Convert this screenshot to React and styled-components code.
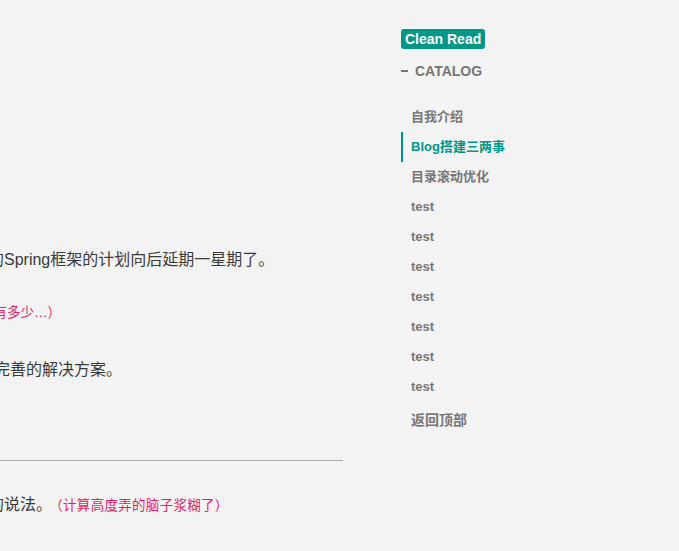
import React from 'react';
import styled, { createGlobalStyle } from 'styled-components';

const TEAL = '#009688';
const GRAY = '#777777';
const TEXT = '#3a3a3a';
const PINK = '#e91e63';

const GlobalStyle = createGlobalStyle`
  html, body {
    margin: 0;
    padding: 0;
    background: #f3f3f3;
  }
  body {
    font-family: "Liberation Sans", "Noto Sans CJK SC", sans-serif;
  }
`;

const Page = styled.div`
  display: flex;
  width: 679px;
  height: 551px;
  overflow: hidden;
  background: #f3f3f3;
`;

const Article = styled.article`
  flex: none;
  width: 343px;
  padding-top: 247px;
  overflow: hidden;
  color: ${TEXT};
`;

const Line = styled.p`
  margin: ${p => p.$gap || 0}px 0 0 ${p => p.$shift}px;
  white-space: nowrap;
  font-size: 16px;
  line-height: 26px;
`;

const Note = styled.span`
  margin-left: 4px;
  color: ${PINK};
  font-size: 13.5px;
  letter-spacing: 0.3px;
  line-height: 20px;
`;

const NoteLine = styled.p`
  margin: ${p => p.$gap}px 0 0 ${p => p.$shift}px;
  white-space: nowrap;
  font-size: 13.5px;
  line-height: 20px;
  color: ${PINK};
`;

const Rule = styled.hr`
  margin: 77px 0 0;
  border: none;
  height: 1px;
  background: #a8a8a8;
`;

const Sidebar = styled.aside`
  margin-left: 58px;
  padding-top: 29px;
  display: flex;
  flex-direction: column;
  align-items: flex-start;
`;

const Badge = styled.div`
  background: ${TEAL};
  color: #fff;
  font-weight: bold;
  font-size: 14px;
  line-height: 20px;
  padding: 0 4px;
  border-radius: 3px;
`;

const Heading = styled.div`
  margin-top: 12px;
  display: flex;
  align-items: center;
  gap: 7px;
  font-size: 14px;
  font-weight: bold;
  line-height: 20px;
  color: ${GRAY};

  &::before {
    content: '';
    width: 7px;
    height: 2px;
    background: ${GRAY};
  }
`;

const Catalog = styled.ul`
  list-style: none;
  margin: 21px 0 0;
  padding: 0;
`;

const Item = styled.li`
  height: 30px;
  line-height: 30px;
  padding-left: 8px;
  border-left: 2px solid ${p => (p.$active ? TEAL : 'transparent')};
  font-size: ${p => (p.$big ? 14 : 13)}px;
  font-weight: bold;
  color: ${p => (p.$active ? TEAL : GRAY)};
  margin-top: ${p => (p.$big ? 3 : 0)}px;
  white-space: nowrap;
`;

const items = ['自我介绍', 'Blog搭建三两事', '目录滚动优化', 'test', 'test', 'test', 'test', 'test', 'test', 'test'];

function App() {
  return (
    <>
      <GlobalStyle />
      <Page>
        <Article>
          <Line $shift={-12}>的Spring框架的计划向后延期一星期了。</Line>
          <NoteLine $gap={30} $shift={-20}>不有多少…）</NoteLine>
          <Line $gap={34} $shift={-6}>完善的解决方案。</Line>
          <Rule />
          <Line $gap={31} $shift={-12}>
            的说法。<Note>（计算高度弄的脑子浆糊了）</Note>
          </Line>
        </Article>
        <Sidebar>
          <Badge>Clean Read</Badge>
          <Heading>CATALOG</Heading>
          <Catalog>
            {items.map((name, i) => (
              <Item key={i} $active={i === 1}>{name}</Item>
            ))}
            <Item $big>返回顶部</Item>
          </Catalog>
        </Sidebar>
      </Page>
    </>
  );
}

export default App;
